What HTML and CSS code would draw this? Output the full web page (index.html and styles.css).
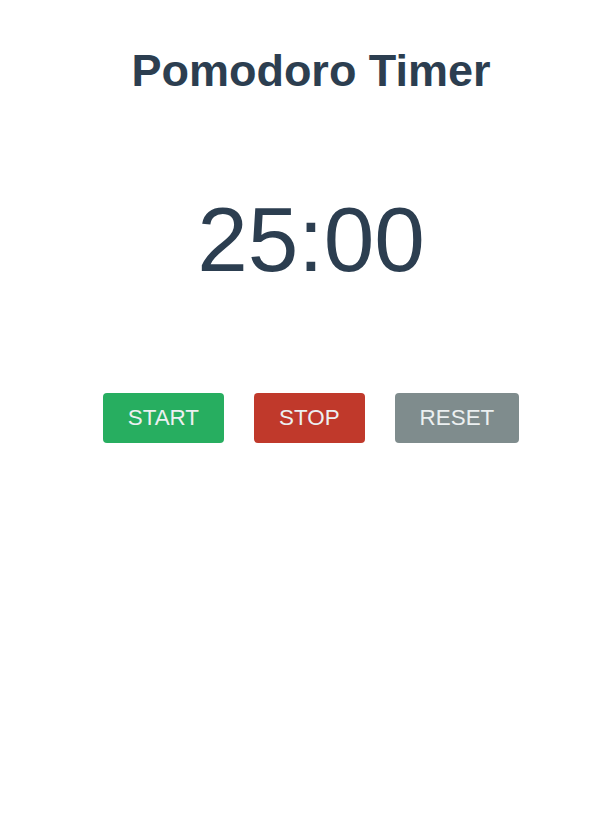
FILE: index.html
```html
<!DOCTYPE html>
<html>
<head>
<meta charset="utf-8">
<link rel="stylesheet" href="styles.css">
</head>
<body>
<main class="app">
  <h1 class="title">Pomodoro Timer</h1>
  <div class="timer">25:00</div>
  <div class="controls">
    <button class="btn btn-start">START</button>
    <button class="btn btn-stop">STOP</button>
    <button class="btn btn-reset">RESET</button>
  </div>
</main>
</body>
</html>
```
FILE: styles.css
```css
html, body {
  margin: 0;
  padding: 0;
  background: #ffffff;
}
body {
  font-family: "Liberation Sans", Arial, sans-serif;
  color: #2c3e50;
}
.app {
  display: flex;
  flex-direction: column;
  align-items: center;
  padding-top: 45px;
  padding-left: 16px;
}
.title {
  margin: 0;
  font-size: 45px;
  font-weight: bold;
  line-height: 52px;
  color: #2c3e50;
}
.timer {
  margin-top: 90px;
  font-size: 91px;
  line-height: 106px;
  color: #2c3e50;
}
.controls {
  margin-top: 100px;
  display: flex;
  justify-content: center;
  gap: 30px;
}
.btn {
  border: none;
  border-radius: 4px;
  padding: 12px 25px;
  font-family: "Liberation Sans", Arial, sans-serif;
  font-size: 22.4px;
  line-height: 26px;
  color: #ecf0f1;
  cursor: pointer;
}
.btn-start { background: #27ae60; }
.btn-stop { background: #c0392b; }
.btn-reset { background: #7f8c8d; }
```
